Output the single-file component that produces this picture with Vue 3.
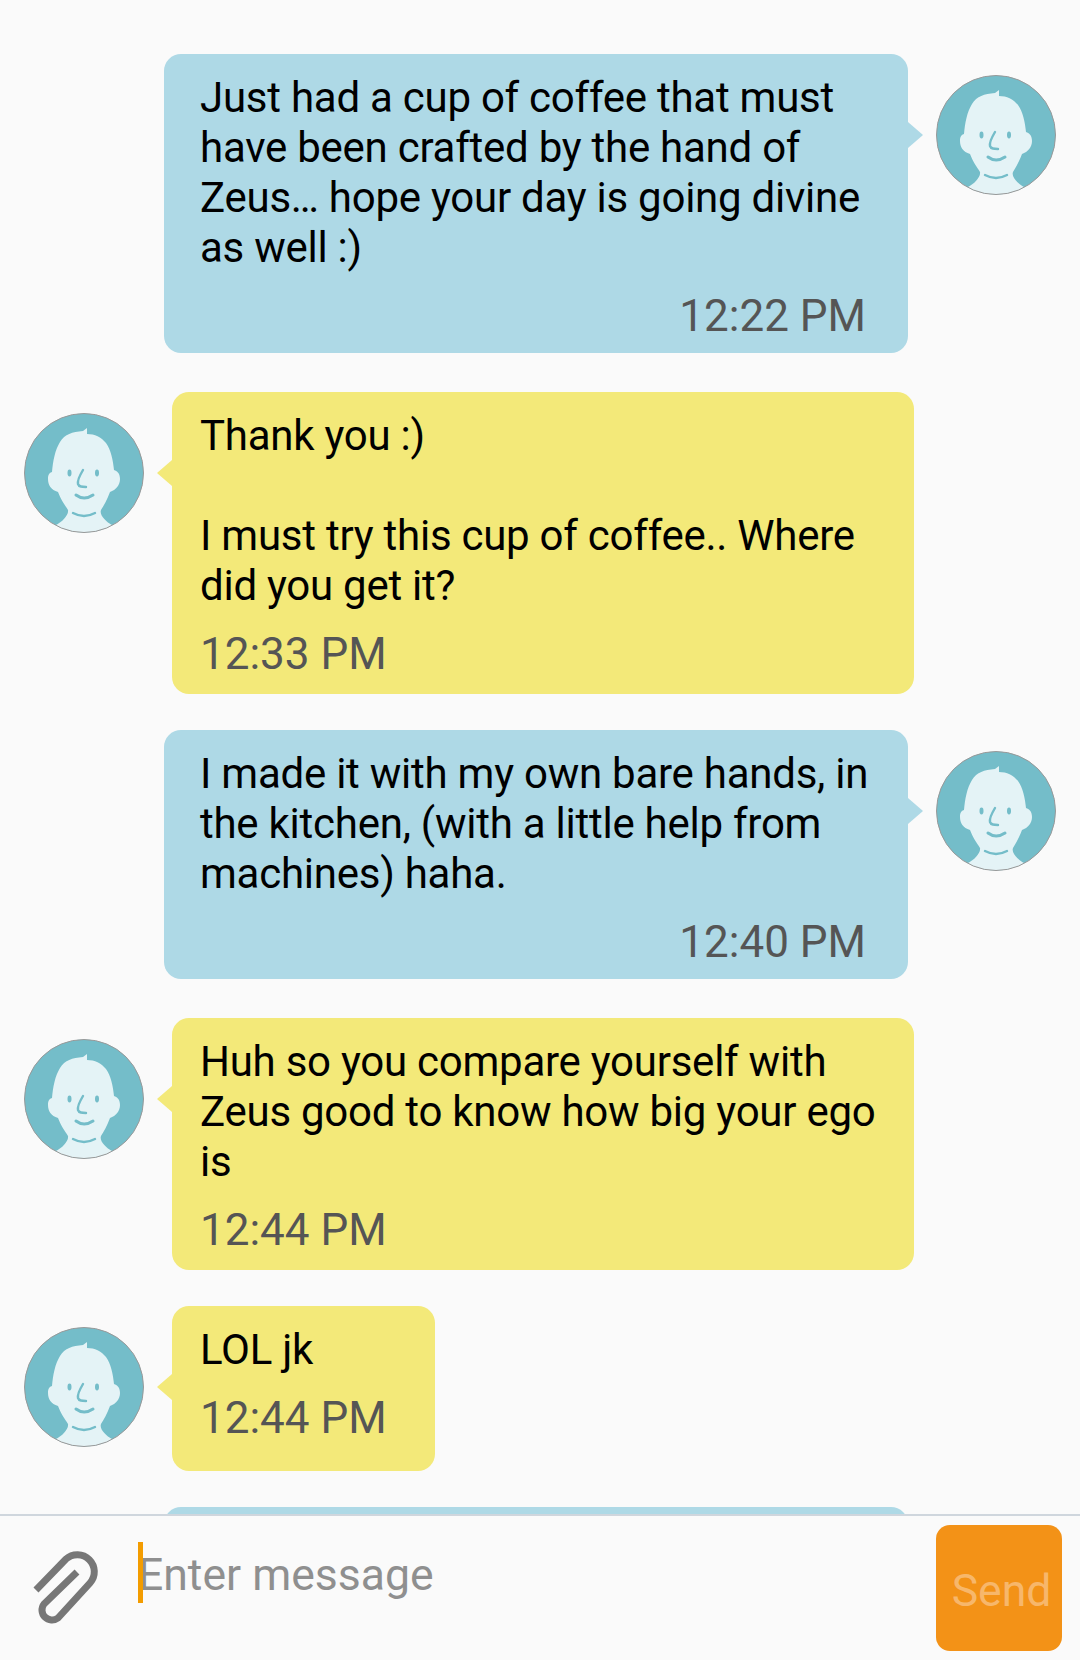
<template>
  <div class="screen">
    <div class="thread">
      <div
        v-for="msg in messages"
        :key="msg.id"
        class="row"
        :class="msg.mine ? 'mine' : 'theirs'"
      >
        <svg v-if="!msg.mine" class="avatar" viewBox="0 0 120 120" aria-hidden="true">
          <use href="#face" />
        </svg>
        <div class="bubble" :class="{ short: msg.short }">
          <template v-if="msg.text">
            <p class="body">{{ msg.text }}</p>
            <p class="time">{{ msg.time }}</p>
          </template>
        </div>
        <svg v-if="msg.mine" class="avatar" viewBox="0 0 120 120" aria-hidden="true">
          <use href="#face" />
        </svg>
      </div>
    </div>

    <div class="composer">
      <svg class="clip" viewBox="0 0 120 144" aria-hidden="true">
        <path
          d="M36 110 L66 79 A17 17 0 0 1 90 103 L58 138 A10 10 0 0 1 44 124 L77 92"
          transform="translate(0 -36)"
          fill="none"
          stroke="#777"
          stroke-width="7"
        />
      </svg>
      <div class="field">
        <span class="caret"></span>
        <span class="placeholder">Enter message</span>
      </div>
      <button class="send" type="button">Send</button>
    </div>

    <svg class="defs" width="0" height="0" aria-hidden="true">
      <defs>
        <clipPath id="faceClip"><circle cx="60" cy="60" r="59.5" /></clipPath>
        <g id="face">
          <circle cx="60" cy="60" r="59.5" fill="#74bdc9" />
          <g clip-path="url(#faceClip)">
            <path
              fill="#e4f3f6"
              d="M63 15 L59 18 C48 19 41 21 36 29 C31 37 29 48 28 59 C24 60 24 64 24 66 C24 72 27 77 34 79 C37 87 41 92 44 97 C45 102 38 109 32 112 L32 124 L88 124 L88 112 C82 109 75 102 77 97 C80 92 83 87 86 79 C92 77 96 72 96 66 C96 60 93 58 90 57 C89 47 87 37 82 30 C77 24 71 21 63 21 Z"
            />
            <ellipse cx="45.5" cy="60" rx="2" ry="3.4" fill="#74bdc9" />
            <ellipse cx="73" cy="60" rx="2" ry="3.4" fill="#74bdc9" />
            <path d="M59 57 C56 62 53 67 54 71 C55 74 58 74 62 74" fill="none" stroke="#74bdc9" stroke-width="2.4" stroke-linecap="round" />
            <path d="M52 82 Q60 88 69 82" fill="none" stroke="#74bdc9" stroke-width="3" stroke-linecap="round" />
            <path d="M49 100 Q60 106 71 100" fill="none" stroke="#74bdc9" stroke-width="2.4" stroke-linecap="round" />
          </g>
          <circle cx="60" cy="60" r="59.5" fill="none" stroke="#999" stroke-width="1" />
        </g>
      </defs>
    </svg>
  </div>
</template>

<script setup>
const messages = [
  { id: 1, mine: true, text: 'Just had a cup of coffee that must have been crafted by the hand of Zeus… hope your day is going divine as well :)', time: '12:22 PM' },
  { id: 2, mine: false, text: 'Thank you :)\n\nI must try this cup of coffee.. Where did you get it?', time: '12:33 PM' },
  { id: 3, mine: true, text: 'I made it with my own bare hands, in the kitchen, (with a little help from machines) haha.', time: '12:40 PM' },
  { id: 4, mine: false, text: 'Huh so you compare yourself with Zeus good to know how big your ego is', time: '12:44 PM' },
  { id: 5, mine: false, short: true, text: 'LOL jk', time: '12:44 PM' },
  // only the top edge of this one shows above the composer
  { id: 6, mine: true, text: '', time: '' }
]
</script>

<style>
html,
body {
  margin: 0;
  background: #fafafa;
}
</style>

<style scoped>
.screen {
  width: 1080px;
  height: 1660px;
  display: flex;
  flex-direction: column;
  background: #fafafa;
  font-family: Roboto, "Noto Sans", sans-serif;
  overflow: hidden;
}

.thread {
  height: 1514px;
  flex: none;
  overflow: hidden;
  padding-top: 54px;
  box-sizing: border-box;
}

.row {
  display: flex;
  align-items: flex-start;
  gap: 28px;
}

.row.mine {
  padding-left: 164px;
  margin-bottom: 39px;
}

.row.theirs {
  padding-left: 24px;
  margin-bottom: 36px;
}

.avatar {
  width: 120px;
  height: 120px;
  flex: none;
  margin-top: 21px;
}

.bubble {
  position: relative;
  box-sizing: border-box;
  border-radius: 17px;
  min-height: 120px;
}

.mine .bubble {
  width: 744px;
  padding: 18px 24px 12px 36px;
  background: #aed9e6;
}

.theirs .bubble {
  width: 742px;
  padding: 18px 24px 15px 28px;
  background: #f3e979;
}

.theirs .bubble.short {
  width: 263px;
  min-height: 165px;
}

.bubble::after {
  content: "";
  position: absolute;
  top: 68px;
  border-top: 13.5px solid transparent;
  border-bottom: 13.5px solid transparent;
}

.mine .bubble::after {
  left: 100%;
  border-left: 15px solid #aed9e6;
}

.theirs .bubble::after {
  right: 100%;
  border-right: 15px solid #f3e979;
}

.body {
  margin: 0;
  position: relative;
  top: 1px;
  font-size: 42px;
  line-height: 50px;
  letter-spacing: -0.25px;
  color: #000;
  white-space: pre-line;
}

.time {
  margin: 19px 0 0;
  font-size: 44px;
  line-height: 50px;
  color: #555;
}

.mine .time {
  text-align: right;
  padding-right: 18px;
}

.composer {
  flex: 1;
  display: flex;
  align-items: flex-start;
  border-top: 2px solid #cfd6dd;
  background: #fafafa;
}

.clip {
  width: 120px;
  height: 144px;
  flex: none;
}

.field {
  position: relative;
  flex: 1;
  padding: 34px 0 0 18px;
  font-size: 44.5px;
  line-height: 50px;
  color: #8f8f8f;
}

.caret {
  position: absolute;
  left: 18px;
  top: 26px;
  width: 5px;
  height: 61px;
  background: #f39c00;
}

.send {
  width: 126px;
  height: 126px;
  margin: 9px 18px 0 0;
  padding: 6px 0 0 5px;
  flex: none;
  border: none;
  border-radius: 14px;
  background: #f39217;
  color: #f7b76b;
  font: inherit;
  font-size: 44.5px;
}

.defs {
  position: absolute;
}
</style>
